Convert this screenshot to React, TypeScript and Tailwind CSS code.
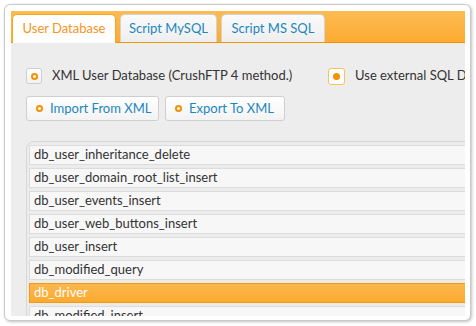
import React from "react";

const rows = [
  "db_user_inheritance_delete",
  "db_user_domain_root_list_insert",
  "db_user_events_insert",
  "db_user_web_buttons_insert",
  "db_user_insert",
  "db_modified_query",
  "db_driver",
  "db_modified_insert",
];

const font = { fontFamily: '"Trebuchet MS", Lato, "DejaVu Sans", sans-serif' };

function Ring() {
  return (
    <span className="inline-block w-[7px] h-[7px] rounded-full border-[2px] border-[#f39200] bg-white" />
  );
}

export default function App() {
  return (
    <div className="w-[476px] h-[326px] bg-white relative" style={font}>
      <div className="absolute left-[4px] top-[4px] w-[467px] h-[317px] rounded-[6px] border border-[#c9c9c9] bg-white shadow-[1px_1px_3px_rgba(0,0,0,0.25)] pl-[6px] pr-[5px] pt-[6px] pb-[4px] flex flex-col">
        {/* header */}
        <div className="h-[32px] shrink-0 bg-gradient-to-b from-[#fdbb52] to-[#fbab2e] border-b border-[#f29400] flex items-end pl-[1px] gap-[4px]">
          <div className="h-[29px] w-[104px] -mb-[1px] bg-white border border-b-0 border-[#f6a623] rounded-t-[5px] flex items-center justify-center text-[13px] text-[#f7931e]">
            User Database
          </div>
          <div className="h-[28px] w-[97px] bg-gradient-to-b from-[#fafafa] to-[#eeeeee] border border-b-0 border-[#d3d3d3] rounded-t-[5px] flex items-center justify-center text-[13px] text-[#1c87bf]">
            Script MySQL
          </div>
          <div className="h-[28px] w-[104px] bg-gradient-to-b from-[#fafafa] to-[#eeeeee] border border-b-0 border-[#d3d3d3] rounded-t-[5px] flex items-center justify-center text-[13px] text-[#1c87bf]">
            Script MS SQL
          </div>
        </div>
        {/* content */}
        <div className="flex-1 bg-[#ededed] overflow-hidden pl-[15px] pt-[25px]">
          <div className="flex items-center h-[16px] whitespace-nowrap">
            <div className="w-[16px] h-[16px] rounded-[3px] border border-[#cfcfcf] bg-gradient-to-b from-white to-[#f1f1f1] flex items-center justify-center shrink-0">
              <Ring />
            </div>
            <span className="ml-[10px] w-[266px] shrink-0 text-[13px] text-[#333]">XML User Database (CrushFTP 4 method.)</span>
            <div className="ml-[10px] w-[17px] h-[17px] rounded-[3px] border border-[#f7c35a] bg-white flex items-center justify-center shrink-0">
              <span className="w-[7px] h-[7px] rounded-full bg-[#f39200]" />
            </div>
            <span className="ml-[10px] text-[13px] text-[#333]">Use external SQL Database</span>
          </div>
          <div className="flex gap-[6px] mt-[12px]">
            <div className="w-[133px] h-[25px] rounded-[3px] border border-[#cfcfcf] bg-gradient-to-b from-white to-[#f3f3f3] flex items-center pl-[9px] gap-[7px] text-[13px] text-[#1c87bf]">
              <Ring />
              <span>Import From XML</span>
            </div>
            <div className="w-[120px] h-[25px] rounded-[3px] border border-[#cfcfcf] bg-gradient-to-b from-white to-[#f3f3f3] flex items-center pl-[9px] gap-[7px] text-[13px] text-[#1c87bf]">
              <Ring />
              <span>Export To XML</span>
            </div>
          </div>
          <div className="mt-[20px] w-[470px] rounded-tl-[8px] border border-[#d8d8d8] bg-[#ececec] pl-[2px] pt-[3px] flex flex-col gap-[3px]">
            {rows.map((r) =>
              r === "db_driver" ? (
                <div
                  key={r}
                  className="h-[20px] border border-[#f39a12] bg-gradient-to-b from-[#fdb74c] to-[#fbaa2e] flex items-center pl-[4px] text-[13px] text-white"
                >
                  {r}
                </div>
              ) : (
                <div
                  key={r}
                  className="h-[20px] border border-[#dcdcdc] bg-[#f7f7f7] flex items-center pl-[4px] text-[13px] text-[#333]"
                >
                  {r}
                </div>
              )
            )}
          </div>
        </div>
      </div>
    </div>
  );
}
